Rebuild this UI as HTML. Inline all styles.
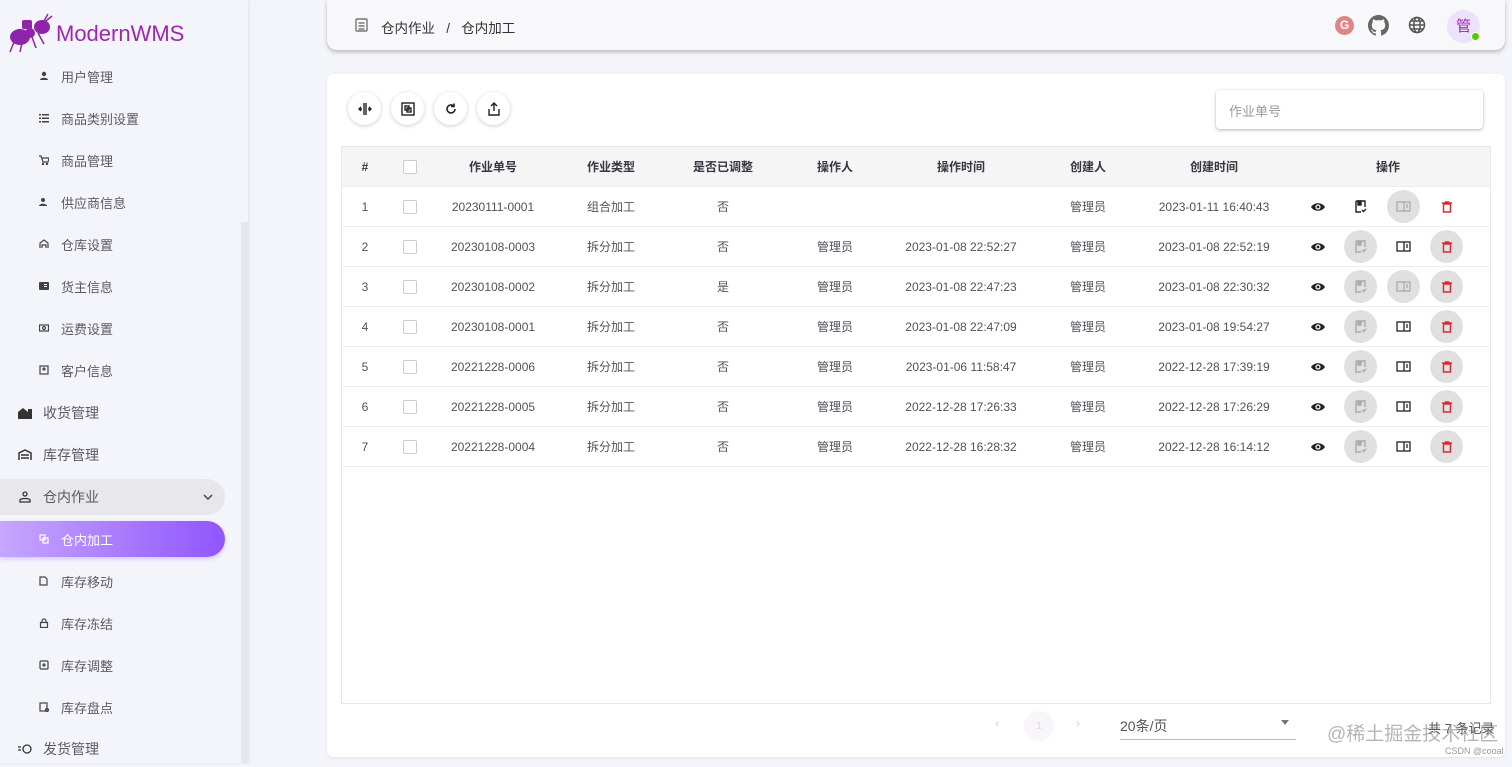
<!DOCTYPE html>
<html><head><meta charset="utf-8"><style>
*{box-sizing:border-box;margin:0;padding:0}
body{width:1512px;height:763px;overflow:hidden;background:#f4f5fa;font-family:"Liberation Sans","Noto Sans CJK SC",sans-serif;position:relative;color:#3a3541de}
.a{position:absolute}
.side{left:0;top:0;width:248px;height:763px;background:#f4f5fa;box-shadow:1px 0 3px rgba(0,0,0,.08)}
.sb{left:241px;top:222px;width:7px;height:541px;background:#e6e7ec}
.it{position:absolute;height:36px;display:flex;align-items:center;font-size:13px;color:#3a3541d0}
.sub{left:0;padding-left:61px}
.top{left:0;padding-left:43px;font-size:14px}
.ic{position:absolute;width:10px;height:10px;left:39px;top:13px}
.top .ic{left:18px;width:14px;height:12px;top:12px}
.hdr{left:327px;top:0;width:1178px;height:50px;background:#f8f8fb;border-radius:0 0 10px 10px;box-shadow:0 2px 4px rgba(0,0,0,.25)}
.card{left:327px;top:74px;width:1178px;height:683px;background:#fff;border-radius:6px;box-shadow:0 1px 3px rgba(0,0,0,.08)}
.tb{width:33px;height:33px;border-radius:50%;background:#fff;box-shadow:0 1px 4px rgba(0,0,0,.2);display:flex;align-items:center;justify-content:center}
.tbl{left:14px;top:72px;width:1150px;height:558px;border:1px solid #e8e8e8;overflow:hidden}
.row{position:absolute;left:0;width:1148px;height:40px;border-bottom:1px solid #ececec;font-size:12px;color:#3a3541de}
.row span{position:absolute;top:0;line-height:40px;transform:translateX(-50%);white-space:nowrap}
.hd{background:#f5f5f5;font-weight:bold;color:#3a3541}
.cb{position:absolute;left:61px;top:13px;width:14px;height:14px;border:1px solid #ccc;border-radius:2px;background:#fff}
.btn{position:absolute;top:3px;width:33px;height:33px;border-radius:50%;display:flex;align-items:center;justify-content:center}
.dis{background:#e0e0e0}
</style></head><body>
<div class="a side">
 <svg class="a" style="left:8px;top:12px" width="46" height="42" viewBox="0 0 46 42"><g fill="#8e24aa"><ellipse cx="12" cy="25" rx="10" ry="8"/><ellipse cx="22" cy="21" rx="5" ry="5"/><ellipse cx="34" cy="15" rx="8" ry="7"/><rect x="14" y="8" width="10" height="9" rx="2"/></g><g stroke="#8e24aa" stroke-width="1.5" fill="none"><path d="M36 9 L40 2 M38 9 L44 4 M6 30 L2 40 M14 31 L12 40 M24 25 L28 36 M30 21 L36 32"/></g></svg>
 <div class="a" style="left:56px;top:21px;font-size:22px;color:#9c27b0">ModernWMS</div>
 <div class="it sub" style="top:58px"><svg class="ic" viewBox="0 0 10 10"><circle cx="5" cy="3" r="2.2" fill="#444"/><path d="M1 9c0-3 8-3 8 0z" fill="#444"/></svg>用户管理</div>
 <div class="it sub" style="top:100px"><svg class="ic" viewBox="0 0 10 10" fill="#444"><rect x="0" y="1" width="2" height="1.5"/><rect x="3" y="1" width="7" height="1.5"/><rect x="0" y="4.5" width="2" height="1.5"/><rect x="3" y="4.5" width="7" height="1.5"/><rect x="0" y="8" width="2" height="1.5"/><rect x="3" y="8" width="7" height="1.5"/></svg>商品类别设置</div>
 <div class="it sub" style="top:142px"><svg class="ic" viewBox="0 0 10 10" fill="none" stroke="#444" stroke-width="1.2"><path d="M0 1h2l2 6h5l1-4H3"/><circle cx="4" cy="9" r=".6"/><circle cx="8" cy="9" r=".6"/></svg>商品管理</div>
 <div class="it sub" style="top:184px"><svg class="ic" viewBox="0 0 10 10" fill="#444"><circle cx="4" cy="3" r="2"/><path d="M0 9c0-3 8-3 8 0z"/></svg>供应商信息</div>
 <div class="it sub" style="top:226px"><svg class="ic" viewBox="0 0 10 10" fill="none" stroke="#444" stroke-width="1.2"><path d="M1 9V4l4-3 4 3v5M3 9V6h4v3"/></svg>仓库设置</div>
 <div class="it sub" style="top:268px"><svg class="ic" viewBox="0 0 10 10" fill="#444"><rect x="0" y="1" width="10" height="8" rx="1"/><rect x="5" y="3" width="3" height="1" fill="#f4f5fa"/><rect x="5" y="5" width="3" height="1" fill="#f4f5fa"/></svg>货主信息</div>
 <div class="it sub" style="top:310px"><svg class="ic" viewBox="0 0 10 10" fill="none" stroke="#444" stroke-width="1.2"><rect x=".5" y="2" width="9" height="6"/><circle cx="5" cy="5" r="1.5"/></svg>运费设置</div>
 <div class="it sub" style="top:352px"><svg class="ic" viewBox="0 0 10 10" fill="none" stroke="#444" stroke-width="1.2"><rect x="1" y="1" width="8" height="8"/><circle cx="5" cy="4" r="1"/></svg>客户信息</div>
 <div class="it top" style="top:395px"><svg class="ic" viewBox="0 0 14 12" fill="#333"><path d="M0 5l5-4 5 4v7H0z"/><rect x="10" y="2" width="4" height="10"/></svg>收货管理</div>
 <div class="it top" style="top:437px"><svg class="ic" viewBox="0 0 14 12" fill="none" stroke="#333" stroke-width="1.5"><path d="M1 11V4l6-3 6 3v7M3 6h8M3 9h8"/></svg>库存管理</div>
 <div class="a" style="left:0;top:479px;width:225px;height:36px;background:#e8e8ec;border-radius:0 18px 18px 0"></div>
 <div class="it top" style="top:479px"><svg class="ic" viewBox="0 0 14 12" fill="none" stroke="#333" stroke-width="1.3"><circle cx="7" cy="3" r="2"/><path d="M2 11h10v-2c0-2-10-2-10 0z"/></svg>仓内作业</div>
 <svg class="a" style="left:203px;top:493px" width="10" height="8" viewBox="0 0 10 8"><path d="M1 2l4 4 4-4" stroke="#444" stroke-width="1.5" fill="none"/></svg>
 <div class="a" style="left:0;top:521px;width:225px;height:36px;background:linear-gradient(90deg,#c6a7fe,#9155fd);border-radius:0 18px 18px 0;box-shadow:0 2px 4px rgba(145,85,253,.3)"></div>
 <div class="it sub" style="top:521px;color:#fff"><svg class="ic" viewBox="0 0 10 10" fill="none" stroke="#fff" stroke-width="1.2"><rect x="1" y="1" width="5" height="5"/><rect x="4" y="4" width="5" height="5"/></svg>仓内加工</div>
 <div class="it sub" style="top:563px"><svg class="ic" viewBox="0 0 10 10" fill="none" stroke="#444" stroke-width="1.2"><path d="M1 1h5l2 2v6H1z"/></svg>库存移动</div>
 <div class="it sub" style="top:605px"><svg class="ic" viewBox="0 0 10 10" fill="none" stroke="#444" stroke-width="1.2"><rect x="1.5" y="4.5" width="7" height="5"/><path d="M3 4.5V3a2 2 0 0 1 4 0v1.5"/></svg>库存冻结</div>
 <div class="it sub" style="top:647px"><svg class="ic" viewBox="0 0 10 10" fill="none" stroke="#444" stroke-width="1.2"><rect x="1" y="1" width="8" height="8" rx="1"/><circle cx="5" cy="5" r="1"/></svg>库存调整</div>
 <div class="it sub" style="top:689px"><svg class="ic" viewBox="0 0 10 10" fill="none" stroke="#444" stroke-width="1.2"><rect x="1" y="1" width="7" height="8"/><circle cx="8" cy="8" r="1.5"/></svg>库存盘点</div>
 <div class="it top" style="top:731px"><svg class="ic" viewBox="0 0 14 12" fill="none" stroke="#333" stroke-width="1.3"><path d="M0 4h3M0 7h3"/><circle cx="9" cy="6" r="4"/></svg>发货管理</div>
</div>
<div class="a sb"></div>
<div class="a hdr">
 <svg class="a" style="left:28px;top:18px" width="13" height="14" viewBox="0 0 13 14" fill="none" stroke="#777" stroke-width="1.4"><rect x="1" y="1" width="11" height="12" rx="1"/><path d="M3.5 5h6M3.5 8h6M3.5 11h6"/></svg>
 <div class="a" style="left:54px;top:17px;font-size:13.5px;color:#333">仓内作业 &nbsp; / &nbsp; 仓内加工</div>
 <div class="a" style="left:1008px;top:16px;width:19px;height:19px;border-radius:50%;background:#e08585;color:#fff;font-size:12px;font-weight:bold;text-align:center;line-height:19px">G</div>
 <svg class="a" style="left:1041px;top:15px" width="21" height="21" viewBox="0 0 16 16"><path fill="#666" d="M8 0C3.58 0 0 3.58 0 8c0 3.54 2.290 6.530 5.470 7.590.4.07.55-.17.55-.38v-1.33c-2.230.48-2.700-1.070-2.700-1.070-.36-.92-.89-1.170-.89-1.170-.73-.5.05-.49.05-.49.8.06 1.230.83 1.230.83.71 1.230 1.870.87 2.330.66.07-.52.28-.87.51-1.070-1.780-.2-3.640-.89-3.640-3.950 0-.87.31-1.590.82-2.150-.08-.2-.36-1.020.08-2.120 0 0 .67-.21 2.200.82A7.700 7.700 0 0 1 8 3.870c.68 0 1.360.09 2 .27 1.530-1.040 2.200-.82 2.200-.82.44 1.100.16 1.920.08 2.120.51.56.82 1.270.82 2.150 0 3.070-1.870 3.750-3.650 3.950.29.25.54.73.54 1.480v2.200c0 .21.15.46.55.38A8 8 0 0 0 16 8c0-4.420-3.580-8-8-8z"/></svg>
 <svg class="a" style="left:1081px;top:16px" width="18" height="18" viewBox="0 0 18 18" fill="none" stroke="#555" stroke-width="1.5"><circle cx="9" cy="9" r="7.5"/><ellipse cx="9" cy="9" rx="3.2" ry="7.5"/><path d="M1.5 9h15M3 5h12M3 13h12"/></svg>
 <div class="a" style="left:1120px;top:10px;width:33px;height:33px;border-radius:50%;background:#ece3fb;color:#9c27b0;font-size:15px;text-align:center;line-height:33px">管</div>
 <div class="a" style="left:1144px;top:32px;width:9px;height:9px;border-radius:50%;background:#56ca00;border:1px solid #fff"></div>
</div>
<div class="a card">
 <div class="a tb" style="left:21px;top:18px"><svg width="14" height="14" viewBox="0 0 14 14" stroke="#222" stroke-width="1.4" fill="none"><path d="M6 1v12M8 1v12M1 7h3M10 7h3M3 5l-2 2 2 2M11 5l2 2-2 2"/></svg></div>
 <div class="a tb" style="left:64px;top:18px"><svg width="14" height="14" viewBox="0 0 14 14" stroke="#222" stroke-width="1.4" fill="none"><rect x="1" y="1" width="12" height="12"/><rect x="4" y="4" width="4" height="4"/><rect x="6" y="6" width="4" height="4"/></svg></div>
 <div class="a tb" style="left:107px;top:18px"><svg width="14" height="14" viewBox="0 0 14 14" stroke="#222" stroke-width="1.6" fill="none"><path d="M11 7a4 4 0 1 1-1.2-2.9"/><path d="M10 1.5v3h-3" /></svg></div>
 <div class="a tb" style="left:150px;top:18px"><svg width="14" height="14" viewBox="0 0 14 14" stroke="#222" stroke-width="1.4" fill="none"><path d="M7 9V1M4 4l3-3 3 3M2 7v6h10V7"/></svg></div>
 <div class="a" style="left:889px;top:16px;width:267px;height:39px;background:#fff;border-radius:4px;box-shadow:0 1px 3px rgba(0,0,0,.3);font-size:13px;color:#999;padding:11px 13px">作业单号</div>
 <div class="a tbl">
  <div class="row hd" style="top:0"><span style="left:23px">#</span><div class="cb"></div><span style="left:151px">作业单号</span><span style="left:269px">作业类型</span><span style="left:381px">是否已调整</span><span style="left:493px">操作人</span><span style="left:619px">操作时间</span><span style="left:746px">创建人</span><span style="left:872px">创建时间</span><span style="left:1046px">操作</span></div>
  <div class="row" style="top:40px"><span style="left:23px">1</span><div class="cb"></div><span style="left:151px">20230111-0001</span><span style="left:269px">组合加工</span><span style="left:381px">否</span><span style="left:746px">管理员</span><span style="left:872px">2023-01-11 16:40:43</span>
   <div class="btn" style="left:959px"><svg width="14" height="10" viewBox="0 0 14 10"><path d="M0 5C3 0 11 0 14 5 11 10 3 10 0 5z" fill="#222"/><circle cx="7" cy="5" r="2.6" fill="#fff"/><circle cx="7" cy="5" r="1.4" fill="#222"/></svg></div>
   <div class="btn" style="left:1002px"><svg width="12" height="13" viewBox="0 0 12 13" fill="none" stroke="#222" stroke-width="1.4"><path d="M1 1h9v6M1 1v11h5"/><rect x="3" y="1" width="3" height="4" fill="#222"/><path d="M7 10l1.5 1.5L11 9"/></svg></div>
   <div class="btn dis" style="left:1045px"><svg width="15" height="11" viewBox="0 0 15 11" fill="none" stroke="#aaa" stroke-width="1.3"><rect x="1" y="1" width="13" height="9"/><path d="M8 1v9M10 4h2M10 6h2"/></svg></div>
   <div class="btn" style="left:1088px"><svg width="10" height="12" viewBox="0 0 10 12" fill="none" stroke="#d32f2f" stroke-width="1.5"><path d="M0 2h10M3 1h4"/><rect x="1.5" y="3" width="7" height="8"/></svg></div></div>
  <div class="row" style="top:80px"><span style="left:23px">2</span><div class="cb"></div><span style="left:151px">20230108-0003</span><span style="left:269px">拆分加工</span><span style="left:381px">否</span><span style="left:493px">管理员</span><span style="left:619px">2023-01-08 22:52:27</span><span style="left:746px">管理员</span><span style="left:872px">2023-01-08 22:52:19</span>
   <div class="btn" style="left:959px"><svg width="14" height="10" viewBox="0 0 14 10"><path d="M0 5C3 0 11 0 14 5 11 10 3 10 0 5z" fill="#222"/><circle cx="7" cy="5" r="2.6" fill="#fff"/><circle cx="7" cy="5" r="1.4" fill="#222"/></svg></div>
   <div class="btn dis" style="left:1002px"><svg width="12" height="13" viewBox="0 0 12 13" fill="none" stroke="#aaa" stroke-width="1.4"><path d="M1 1h9v6M1 1v11h5"/><rect x="3" y="1" width="3" height="4" fill="#aaa"/><path d="M7 10l1.5 1.5L11 9"/></svg></div>
   <div class="btn" style="left:1045px"><svg width="15" height="11" viewBox="0 0 15 11" fill="none" stroke="#222" stroke-width="1.3"><rect x="1" y="1" width="13" height="9"/><path d="M8 1v9M10 4h2M10 6h2"/></svg></div>
   <div class="btn dis" style="left:1088px"><svg width="10" height="12" viewBox="0 0 10 12" fill="none" stroke="#d32f2f" stroke-width="1.5"><path d="M0 2h10M3 1h4"/><rect x="1.5" y="3" width="7" height="8"/></svg></div></div>
  <div class="row" style="top:120px"><span style="left:23px">3</span><div class="cb"></div><span style="left:151px">20230108-0002</span><span style="left:269px">拆分加工</span><span style="left:381px">是</span><span style="left:493px">管理员</span><span style="left:619px">2023-01-08 22:47:23</span><span style="left:746px">管理员</span><span style="left:872px">2023-01-08 22:30:32</span>
   <div class="btn" style="left:959px"><svg width="14" height="10" viewBox="0 0 14 10"><path d="M0 5C3 0 11 0 14 5 11 10 3 10 0 5z" fill="#222"/><circle cx="7" cy="5" r="2.6" fill="#fff"/><circle cx="7" cy="5" r="1.4" fill="#222"/></svg></div>
   <div class="btn dis" style="left:1002px"><svg width="12" height="13" viewBox="0 0 12 13" fill="none" stroke="#aaa" stroke-width="1.4"><path d="M1 1h9v6M1 1v11h5"/><rect x="3" y="1" width="3" height="4" fill="#aaa"/><path d="M7 10l1.5 1.5L11 9"/></svg></div>
   <div class="btn dis" style="left:1045px"><svg width="15" height="11" viewBox="0 0 15 11" fill="none" stroke="#aaa" stroke-width="1.3"><rect x="1" y="1" width="13" height="9"/><path d="M8 1v9M10 4h2M10 6h2"/></svg></div>
   <div class="btn dis" style="left:1088px"><svg width="10" height="12" viewBox="0 0 10 12" fill="none" stroke="#d32f2f" stroke-width="1.5"><path d="M0 2h10M3 1h4"/><rect x="1.5" y="3" width="7" height="8"/></svg></div></div>
  <div class="row" style="top:160px"><span style="left:23px">4</span><div class="cb"></div><span style="left:151px">20230108-0001</span><span style="left:269px">拆分加工</span><span style="left:381px">否</span><span style="left:493px">管理员</span><span style="left:619px">2023-01-08 22:47:09</span><span style="left:746px">管理员</span><span style="left:872px">2023-01-08 19:54:27</span>
   <div class="btn" style="left:959px"><svg width="14" height="10" viewBox="0 0 14 10"><path d="M0 5C3 0 11 0 14 5 11 10 3 10 0 5z" fill="#222"/><circle cx="7" cy="5" r="2.6" fill="#fff"/><circle cx="7" cy="5" r="1.4" fill="#222"/></svg></div>
   <div class="btn dis" style="left:1002px"><svg width="12" height="13" viewBox="0 0 12 13" fill="none" stroke="#aaa" stroke-width="1.4"><path d="M1 1h9v6M1 1v11h5"/><rect x="3" y="1" width="3" height="4" fill="#aaa"/><path d="M7 10l1.5 1.5L11 9"/></svg></div>
   <div class="btn" style="left:1045px"><svg width="15" height="11" viewBox="0 0 15 11" fill="none" stroke="#222" stroke-width="1.3"><rect x="1" y="1" width="13" height="9"/><path d="M8 1v9M10 4h2M10 6h2"/></svg></div>
   <div class="btn dis" style="left:1088px"><svg width="10" height="12" viewBox="0 0 10 12" fill="none" stroke="#d32f2f" stroke-width="1.5"><path d="M0 2h10M3 1h4"/><rect x="1.5" y="3" width="7" height="8"/></svg></div></div>
  <div class="row" style="top:200px"><span style="left:23px">5</span><div class="cb"></div><span style="left:151px">20221228-0006</span><span style="left:269px">拆分加工</span><span style="left:381px">否</span><span style="left:493px">管理员</span><span style="left:619px">2023-01-06 11:58:47</span><span style="left:746px">管理员</span><span style="left:872px">2022-12-28 17:39:19</span>
   <div class="btn" style="left:959px"><svg width="14" height="10" viewBox="0 0 14 10"><path d="M0 5C3 0 11 0 14 5 11 10 3 10 0 5z" fill="#222"/><circle cx="7" cy="5" r="2.6" fill="#fff"/><circle cx="7" cy="5" r="1.4" fill="#222"/></svg></div>
   <div class="btn dis" style="left:1002px"><svg width="12" height="13" viewBox="0 0 12 13" fill="none" stroke="#aaa" stroke-width="1.4"><path d="M1 1h9v6M1 1v11h5"/><rect x="3" y="1" width="3" height="4" fill="#aaa"/><path d="M7 10l1.5 1.5L11 9"/></svg></div>
   <div class="btn" style="left:1045px"><svg width="15" height="11" viewBox="0 0 15 11" fill="none" stroke="#222" stroke-width="1.3"><rect x="1" y="1" width="13" height="9"/><path d="M8 1v9M10 4h2M10 6h2"/></svg></div>
   <div class="btn dis" style="left:1088px"><svg width="10" height="12" viewBox="0 0 10 12" fill="none" stroke="#d32f2f" stroke-width="1.5"><path d="M0 2h10M3 1h4"/><rect x="1.5" y="3" width="7" height="8"/></svg></div></div>
  <div class="row" style="top:240px"><span style="left:23px">6</span><div class="cb"></div><span style="left:151px">20221228-0005</span><span style="left:269px">拆分加工</span><span style="left:381px">否</span><span style="left:493px">管理员</span><span style="left:619px">2022-12-28 17:26:33</span><span style="left:746px">管理员</span><span style="left:872px">2022-12-28 17:26:29</span>
   <div class="btn" style="left:959px"><svg width="14" height="10" viewBox="0 0 14 10"><path d="M0 5C3 0 11 0 14 5 11 10 3 10 0 5z" fill="#222"/><circle cx="7" cy="5" r="2.6" fill="#fff"/><circle cx="7" cy="5" r="1.4" fill="#222"/></svg></div>
   <div class="btn dis" style="left:1002px"><svg width="12" height="13" viewBox="0 0 12 13" fill="none" stroke="#aaa" stroke-width="1.4"><path d="M1 1h9v6M1 1v11h5"/><rect x="3" y="1" width="3" height="4" fill="#aaa"/><path d="M7 10l1.5 1.5L11 9"/></svg></div>
   <div class="btn" style="left:1045px"><svg width="15" height="11" viewBox="0 0 15 11" fill="none" stroke="#222" stroke-width="1.3"><rect x="1" y="1" width="13" height="9"/><path d="M8 1v9M10 4h2M10 6h2"/></svg></div>
   <div class="btn dis" style="left:1088px"><svg width="10" height="12" viewBox="0 0 10 12" fill="none" stroke="#d32f2f" stroke-width="1.5"><path d="M0 2h10M3 1h4"/><rect x="1.5" y="3" width="7" height="8"/></svg></div></div>
  <div class="row" style="top:280px"><span style="left:23px">7</span><div class="cb"></div><span style="left:151px">20221228-0004</span><span style="left:269px">拆分加工</span><span style="left:381px">否</span><span style="left:493px">管理员</span><span style="left:619px">2022-12-28 16:28:32</span><span style="left:746px">管理员</span><span style="left:872px">2022-12-28 16:14:12</span>
   <div class="btn" style="left:959px"><svg width="14" height="10" viewBox="0 0 14 10"><path d="M0 5C3 0 11 0 14 5 11 10 3 10 0 5z" fill="#222"/><circle cx="7" cy="5" r="2.6" fill="#fff"/><circle cx="7" cy="5" r="1.4" fill="#222"/></svg></div>
   <div class="btn dis" style="left:1002px"><svg width="12" height="13" viewBox="0 0 12 13" fill="none" stroke="#aaa" stroke-width="1.4"><path d="M1 1h9v6M1 1v11h5"/><rect x="3" y="1" width="3" height="4" fill="#aaa"/><path d="M7 10l1.5 1.5L11 9"/></svg></div>
   <div class="btn" style="left:1045px"><svg width="15" height="11" viewBox="0 0 15 11" fill="none" stroke="#222" stroke-width="1.3"><rect x="1" y="1" width="13" height="9"/><path d="M8 1v9M10 4h2M10 6h2"/></svg></div>
   <div class="btn dis" style="left:1088px"><svg width="10" height="12" viewBox="0 0 10 12" fill="none" stroke="#d32f2f" stroke-width="1.5"><path d="M0 2h10M3 1h4"/><rect x="1.5" y="3" width="7" height="8"/></svg></div></div>
 </div>
 <div class="a" style="left:668px;top:642px;font-size:12px;color:#ccc">‹</div>
 <div class="a" style="left:697px;top:637px;width:30px;height:30px;border-radius:50%;background:#f8f5fb;font-size:11px;color:#ddd;text-align:center;line-height:30px">1</div>
 <div class="a" style="left:749px;top:642px;font-size:12px;color:#ccc">›</div>
 <div class="a" style="left:793px;top:642px;width:176px;height:24px;border-bottom:1px solid #bbb;font-size:14px;color:#555">20条/页</div>
 <div class="a" style="left:954px;top:646px;width:0;height:0;border-left:4px solid transparent;border-right:4px solid transparent;border-top:5px solid #777"></div>
 <div class="a" style="left:1101px;top:644px;font-size:13px;color:#555">共 7 条记录</div>
 <div class="a" style="left:1000px;top:645px;font-size:19px;color:rgba(120,120,120,.55)">@稀土掘金技术社区</div>
 <div class="a" style="left:1118px;top:672px;font-size:9px;color:#999">CSDN @cooal</div>
</div>
</body></html>
